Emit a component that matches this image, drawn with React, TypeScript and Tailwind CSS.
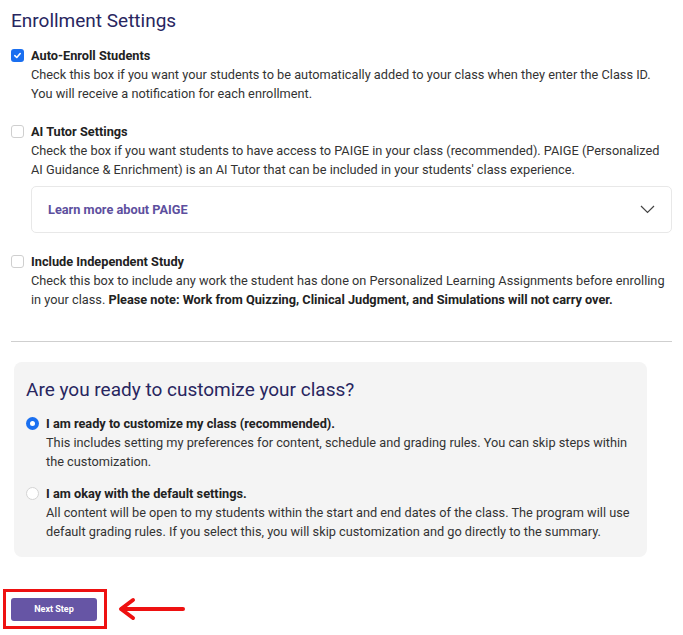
import React from "react";

function CheckBox({ checked }: { checked?: boolean }) {
  return checked ? (
    <span className="mt-[3px] flex h-[13px] w-[13px] shrink-0 items-center justify-center rounded-[3px] bg-[#1a6ff0]">
      <svg width="9" height="9" viewBox="0 0 10 10" fill="none">
        <path d="M2 5.2 L4.2 7.2 L8 2.8" stroke="white" strokeWidth="1.8" strokeLinecap="round" strokeLinejoin="round" />
      </svg>
    </span>
  ) : (
    <span className="mt-[3px] h-[13px] w-[13px] shrink-0 rounded-[3px] border border-[#cfcfcf] bg-white" />
  );
}

function Radio({ checked }: { checked?: boolean }) {
  return checked ? (
    <span className="mt-[3px] flex h-[13px] w-[13px] shrink-0 items-center justify-center rounded-full bg-[#1a6ff0]">
      <span className="h-[5px] w-[5px] rounded-full bg-white" />
    </span>
  ) : (
    <span className="mt-[3px] h-[13px] w-[13px] shrink-0 rounded-full border border-[#d4d4d4] bg-white" />
  );
}

export default function App() {
  return (
    <div className="min-h-[635px] bg-white pl-[11px] pr-[11px] pt-[8px] text-[12.75px] leading-[19px] text-[#333] [font-family:Roboto,'Liberation_Sans',sans-serif]">
      <h1 className="text-[19px] leading-[26px] text-[#28265f]">Enrollment Settings</h1>

      <div className="mt-[12px] flex gap-[7px]">
        <CheckBox checked />
        <div>
          <div className="font-bold text-[#222]">Auto-Enroll Students</div>
          <div>
            Check this box if you want your students to be automatically added to your class when they enter the Class ID.
            <br />
            You will receive a notification for each enrollment.
          </div>
        </div>
      </div>

      <div className="mt-[19px] flex gap-[7px]">
        <CheckBox />
        <div className="flex-1">
          <div className="font-bold text-[#222]">AI Tutor Settings</div>
          <div>
            Check the box if you want students to have access to PAIGE in your class (recommended). PAIGE (Personalized AI Guidance &amp; Enrichment) is an AI Tutor that can be included in your students' class experience.
          </div>
          <div className="mt-[7px] flex h-[47px] items-center justify-between rounded-[5px] border border-[#e8e8e8] pl-[16px] pr-[16px]">
            <span className="font-bold text-[#5d4f9e]">Learn more about PAIGE</span>
            <svg width="15" height="9" viewBox="0 0 15 9" fill="none">
              <path d="M1 1 L7.5 7.5 L14 1" stroke="#444" strokeWidth="1.2" />
            </svg>
          </div>
        </div>
      </div>

      <div className="mt-[19px] flex gap-[7px]">
        <CheckBox />
        <div>
          <div className="font-bold text-[#222]">Include Independent Study</div>
          <div>
            Check this box to include any work the student has done on Personalized Learning Assignments before enrolling in your class.{" "}
            <span className="font-bold text-[#222]">Please note: Work from Quizzing, Clinical Judgment, and Simulations will not carry over.</span>
          </div>
        </div>
      </div>

      <hr className="mt-[32px] border-t border-[#cfcfcf]" />

      <div className="ml-[3px] mr-[25px] mt-[20px] rounded-[8px] bg-[#f4f4f4] pb-[16px] pl-[12px] pr-[12px] pt-[15px]">
        <h2 className="text-[19px] leading-[26px] text-[#28265f]">Are you ready to customize your class?</h2>
        <div className="mt-[11px] flex gap-[7px]">
          <Radio checked />
          <div>
            <div className="font-bold text-[#222]">I am ready to customize my class (recommended).</div>
            <div>
              This includes setting my preferences for content, schedule and grading rules. You can skip steps within the customization.
            </div>
          </div>
        </div>
        <div className="mt-[13px] flex gap-[7px]">
          <Radio />
          <div>
            <div className="font-bold text-[#222]">I am okay with the default settings.</div>
            <div>
              All content will be open to my students within the start and end dates of the class. The program will use default grading rules. If you select this, you will skip customization and go directly to the summary.
            </div>
          </div>
        </div>
      </div>

      <div className="-ml-[8px] mt-[32px] flex items-center gap-[10px]">
        <div className="h-[40px] w-[104px] border-[3px] border-[#ee1111] pl-[5px] pt-[6px]">
          <button className="flex h-[23px] w-[86px] items-center justify-center rounded-[3px] bg-[#6655a5] text-[9px] font-bold text-white">
            Next Step
          </button>
        </div>
        <svg width="70" height="24" viewBox="0 0 70 24" fill="none">
          <path d="M66 12 L5 12" stroke="#ee1111" strokeWidth="4" strokeLinecap="round" />
          <path d="M16 3 L4 12 L16 21" stroke="#ee1111" strokeWidth="4" strokeLinecap="round" strokeLinejoin="round" />
        </svg>
      </div>
    </div>
  );
}
